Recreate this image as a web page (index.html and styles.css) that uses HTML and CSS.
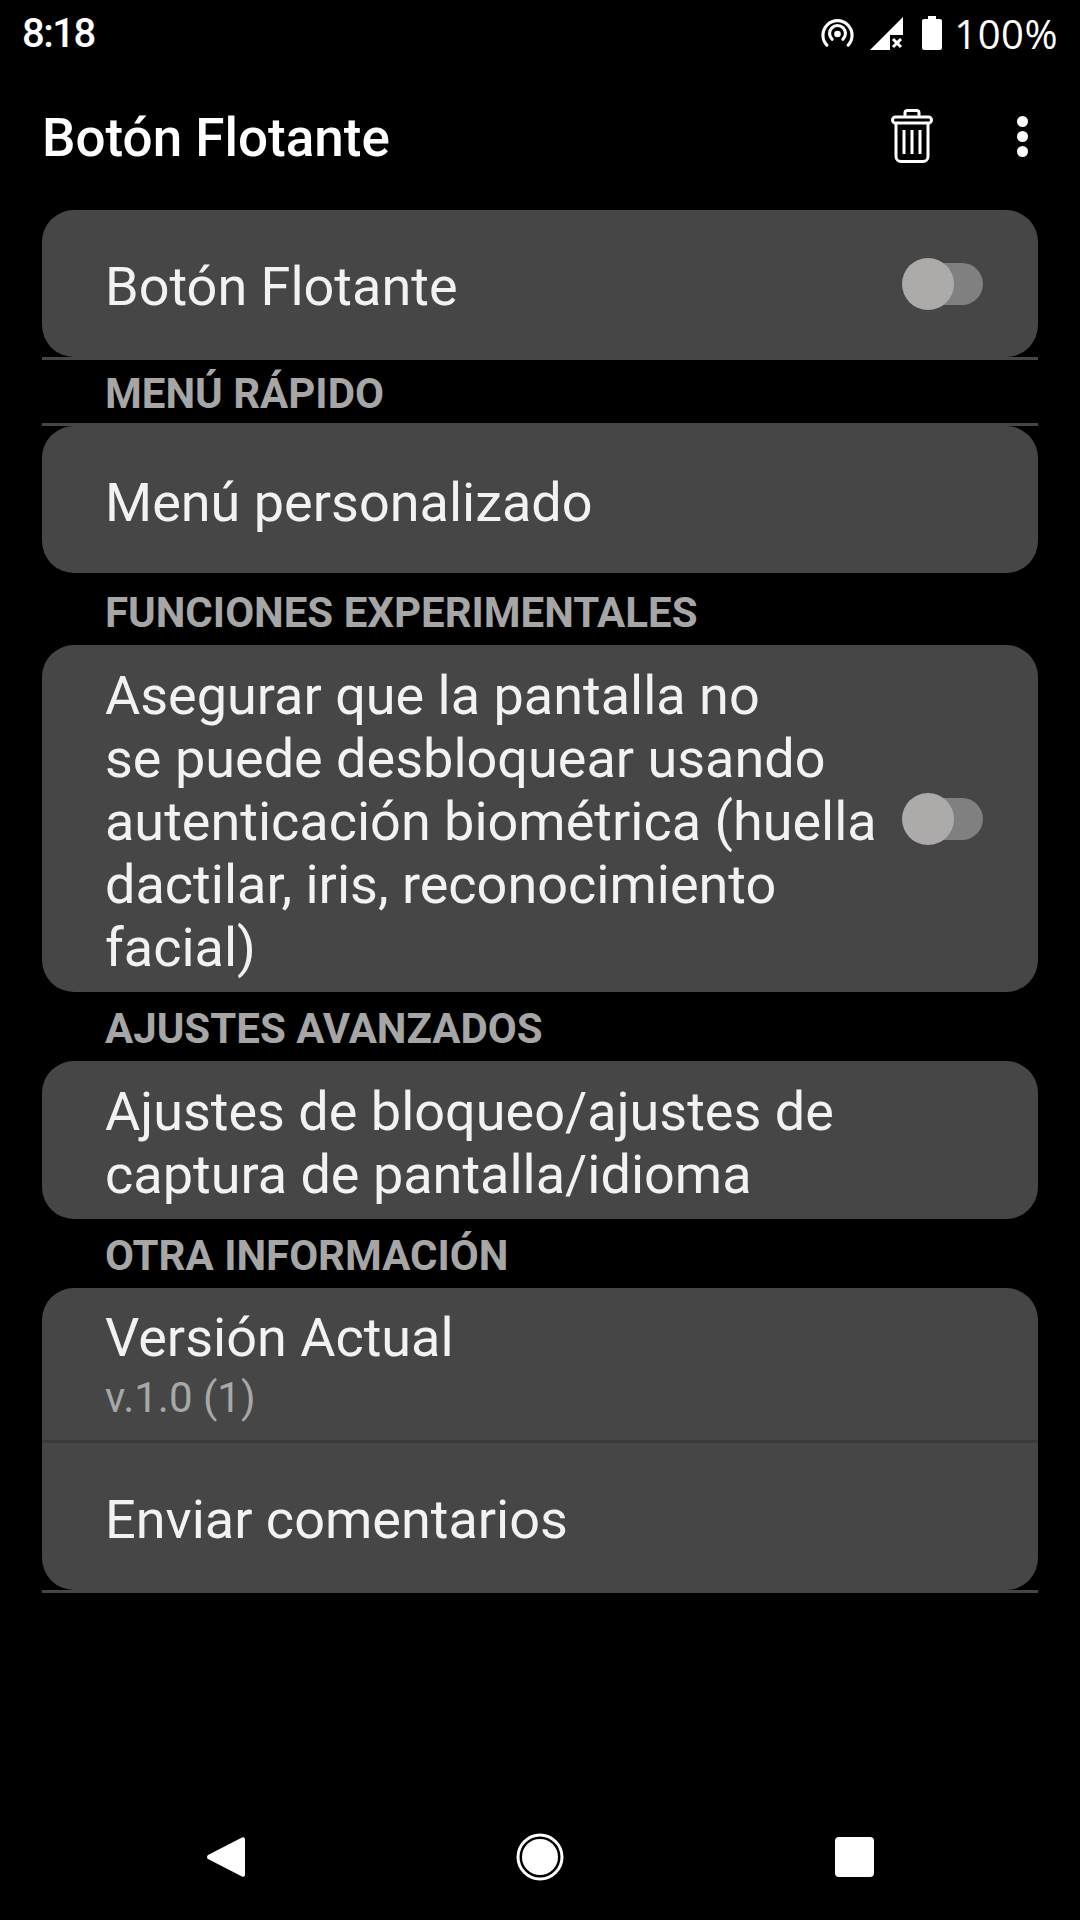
FILE: index.html
```html
<html><head>
<title>Botón Flotante</title>
<link rel="stylesheet" href="styles.css">
</head>
<body>
  <div class="status">
    <span class="time">8:18</span>
    <div class="status-right">
      <svg class="ic-hotspot" width="33" height="28" viewBox="0 0 34 28"><g fill="none" stroke="#fff" stroke-width="3.2" stroke-linecap="round"><path d="M6 26.500A15 15 0 1 1 28 26.500"/><path d="M11.500 20.500A8.200 8.200 0 1 1 22.500 20.500"/></g><circle cx="17" cy="15" r="3.400" fill="#fff"/></svg>
      <svg class="ic-signal" width="33" height="33" viewBox="0 0 33 33"><path d="M33 0V18H20V33H0Z" fill="#fff"/><path d="M23 22l8 8M31 22l-8 8" stroke="#fff" stroke-width="3"/></svg>
      <svg class="ic-battery" width="20" height="34" viewBox="0 0 20 34"><path d="M6 0h8v3h4a2 2 0 0 1 2 2v27a2 2 0 0 1-2 2H2a2 2 0 0 1-2-2V5a2 2 0 0 1 2-2h4Z" fill="#fff"/></svg>
      <span class="pct">100%</span>
    </div>
  </div>

  <div class="toolbar">
    <span class="title">Botón Flotante</span>
    <svg class="ic-trash" width="42" height="54" viewBox="0 0 42 54"><g fill="none" stroke="#fff" stroke-width="3"><rect x="1.500" y="8" width="39" height="6" rx="3"/><path d="M14 7V4a2.500 2.500 0 0 1 2.500-2.500h9A2.500 2.500 0 0 1 28 4v3"/><path d="M5 14v33.500a5 5 0 0 0 5 5h22a5 5 0 0 0 5-5V14"/><path d="M13 21v24M21 21v24M29 21v24"/></g></svg>
    <div class="dots"><i></i><i></i><i></i></div>
  </div>

  <div class="card row one">
    <span class="label">Botón Flotante</span>
    <div class="switch"><div class="thumb"></div></div>
  </div>
  <div class="rule"></div>
  <div class="head short">MENÚ RÁPIDO</div>
  <div class="rule"></div>
  <div class="card row one">
    <span class="label">Menú personalizado</span>
  </div>
  <div class="head gap">FUNCIONES EXPERIMENTALES</div>
  <div class="card row three">
    <span class="label">Asegurar que la pantalla no<br>se puede desbloquear usando<br>autenticación biométrica (huella<br>dactilar, iris, reconocimiento<br>facial)</span>
    <div class="switch"><div class="thumb"></div></div>
  </div>
  <div class="head">AJUSTES AVANZADOS</div>
  <div class="card row four">
    <span class="label">Ajustes de bloqueo/ajustes de<br>captura de pantalla/idioma</span>
  </div>
  <div class="head">OTRA INFORMACIÓN</div>
  <div class="card">
    <div class="row version">
      <div>
        <div class="label">Versión Actual</div>
        <div class="sub">v.1.0 (1)</div>
      </div>
    </div>
    <div class="inner-rule"></div>
    <div class="row send"><span class="label">Enviar comentarios</span></div>
  </div>
  <div class="rule"></div>

  <div class="nav">
    <svg width="38" height="42" viewBox="0 0 38 42"><path d="M35 1.500a2 2 0 0 1 3 1.500v36a2 2 0 0 1-3 1.500L1 23a2.500 2.500 0 0 1 0-4Z" fill="#fff"/></svg>
    <svg width="48" height="48" viewBox="0 0 48 48"><circle cx="24" cy="24" r="22" fill="none" stroke="#fff" stroke-width="3"/><circle cx="24" cy="24" r="18" fill="#fff"/></svg>
    <div class="nav-square"></div>
  </div>
</body>
</html>
```
FILE: styles.css
```css
body {
    margin: 0;
    width: 1080px;
    height: 1920px;
    background: #000;
    color: #f2f2f2;
    font-family: Roboto, sans-serif;
    display: flex;
    flex-direction: column;
    overflow: hidden;
}
.status {
    height: 66px;
    padding: 0 22px;
    display: flex;
    align-items: center;
    justify-content: space-between;
    color: #fff;
    font-size: 40px;
}
.time {
    font-weight: 500;
    letter-spacing: -1.5px;
}
.pct {
    font-family: "Open Sans", sans-serif;
    letter-spacing: 0.5px;
}
.status-right {
    display: flex;
    align-items: center;
}
.ic-hotspot { margin-right: 16px; }
.ic-signal { margin-right: 19px; }
.ic-battery { margin-right: 12px; }
.toolbar {
    height: 140px;
    padding: 0 44px 4px 42px;
    display: flex;
    align-items: center;
}
.title {
    flex: 1;
    padding-top: 4px;
    font-size: 53px;
    font-weight: 500;
    color: #fff;
}
.ic-trash { margin-right: 84px; }
.dots {
    display: flex;
    flex-direction: column;
    gap: 4px;
    margin-right: 8px;
}
.dots i {
    width: 11px;
    height: 11px;
    border-radius: 50%;
    background: #fff;
}
.card {
    margin: 0 42px;
    background: #464646;
    border-radius: 32px;
}
.row {
    display: flex;
    align-items: center;
    justify-content: space-between;
    padding: 0 55px 0 63px;
}
.one { height: 147px; }
.three { height: 347px; }
.four { height: 158px; }
.version { height: 152px; }
.send { height: 147px; }
.label {
    font-size: 54px;
    line-height: 63px;
    padding-top: 6px;
}
.card .switch { margin-top: 0; }
.sub {
    font-size: 42px;
    line-height: 50px;
    color: #a8a8a8;
    margin-top: 4px;
}
.version .label { padding-top: 0; }
.rule {
    height: 3px;
    margin: 0 42px;
    background: #464646;
}
.inner-rule {
    height: 3px;
    background: #3a3a3a;
}
.head {
    height: 69px;
    padding: 0 105px;
    line-height: 74px;
    font-size: 42px;
    font-weight: 700;
    color: #a6a6a6;
}
.head.gap { margin-top: 3px; }
.head.short {
    height: 63px;
    line-height: 68px;
}
.switch {
    position: relative;
    width: 80px;
    height: 42px;
    border-radius: 21px;
    background: #808080;
}
.thumb {
    position: absolute;
    left: -1px;
    top: -5px;
    width: 52px;
    height: 52px;
    border-radius: 50%;
    background: #adabaa;
}
.nav {
    margin-top: auto;
    height: 126px;
    padding: 0 206px 0 207px;
    display: flex;
    align-items: center;
    justify-content: space-between;
}
.nav-square {
    width: 39px;
    height: 40px;
    border-radius: 4px;
    background: #fff;
}
```
